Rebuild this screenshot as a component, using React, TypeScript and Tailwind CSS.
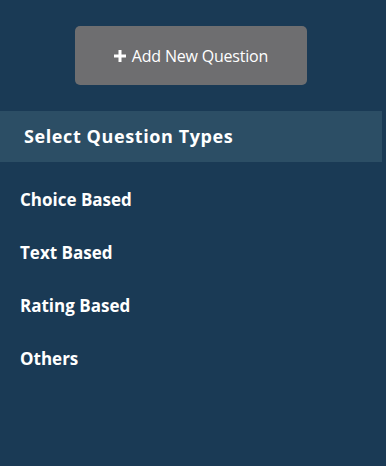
import React from 'react';

const types = ['Choice Based', 'Text Based', 'Rating Based', 'Others'];

export default function App() {
  return (
    <div
      className="w-[386px] h-[466px] bg-[#1a3a55] text-white overflow-hidden"
      style={{ fontFamily: '"Open Sans", "Noto Sans", sans-serif' }}
    >
      <div className="pt-[26px] flex justify-center">
        <button className="ml-[-4px] w-[232px] h-[59px] rounded-[5px] bg-[#6e6e70] flex items-center justify-center gap-[6px] text-[16px] text-white">
          <svg width="12" height="12" viewBox="0 0 12 12">
            <path d="M4.5 0h3v4.5H12v3H7.5V12h-3V7.5H0v-3h4.5z" fill="#fff" />
          </svg>
          <span className="tracking-[-0.2px]">Add New Question</span>
        </button>
      </div>

      <div className="mt-[26px] w-[382px] h-[51px] bg-[#2c4e65] flex items-center pl-[24px]">
        <h2 className="text-[18px] font-bold tracking-[0.6px]">Select Question Types</h2>
      </div>

      <ul className="pl-[20px] pt-[26px] flex flex-col gap-[29px]">
        {types.map(t => (
          <li key={t} className="text-[17px] font-bold leading-[24px]">
            {t}
          </li>
        ))}
      </ul>
    </div>
  );
}
